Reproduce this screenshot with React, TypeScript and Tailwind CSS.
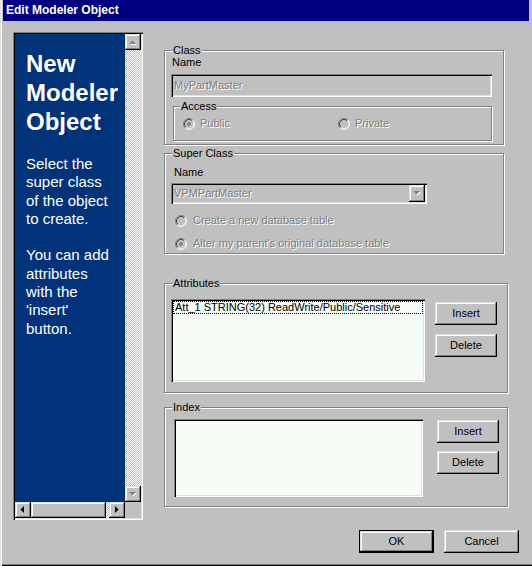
const raised =
  "shadow-[inset_-1px_-1px_0_#000,inset_1px_1px_0_#dfdfdf,inset_-2px_-2px_0_#808080,inset_2px_2px_0_#fff]";
const sunken =
  "shadow-[inset_1px_1px_0_#808080,inset_2px_2px_0_#000,inset_-1px_-1px_0_#fff,inset_-2px_-2px_0_#dfdfdf]";
const checker =
  "bg-[image:repeating-conic-gradient(#fff_0%_25%,#c0c0c0_0%_50%)] bg-[length:2px_2px]";
const disabledText = "text-[#808080] [text-shadow:1px_1px_0_#fff]";

type Dir = "up" | "down" | "left" | "right";

function Arrow({ dir, disabled }: { dir: Dir; disabled?: boolean }) {
  const pts: Record<Dir, string> = {
    up: "4,10 11,10 7.5,6.5",
    down: "4,6 11,6 7.5,9.5",
    left: "9,4 9,11 5.5,7.5",
    right: "6,4 6,11 9.5,7.5",
  };
  return (
    <svg width="16" height="16" viewBox="0 0 16 16">
      {disabled && <polygon points={pts[dir]} fill="#fff" transform="translate(1 1)" />}
      <polygon points={pts[dir]} fill={disabled ? "#808080" : "#000"} />
    </svg>
  );
}

function ScrollButton({ dir, disabled }: { dir: Dir; disabled?: boolean }) {
  return (
    <div className={`w-[16px] h-[16px] bg-[#c0c0c0] ${raised}`}>
      <Arrow dir={dir} disabled={disabled} />
    </div>
  );
}

function Radio({ checked }: { checked?: boolean }) {
  return (
    <svg width="12" height="12" viewBox="0 0 12 12" className="shrink-0">
      <circle cx="6" cy="6" r="5" fill="#c0c0c0" />
      <path d="M2.11 9.89 A5.5 5.5 0 0 1 9.89 2.11" stroke="#808080" fill="none" />
      <path d="M9.89 2.11 A5.5 5.5 0 0 1 2.11 9.89" stroke="#fff" fill="none" />
      <path d="M2.82 9.18 A4.5 4.5 0 0 1 9.18 2.82" stroke="#404040" fill="none" />
      <path d="M9.18 2.82 A4.5 4.5 0 0 1 2.82 9.18" stroke="#dfdfdf" fill="none" />
      {checked && <circle cx="6" cy="6" r="2" fill="#808080" />}
    </svg>
  );
}

function Group({
  label,
  labelLeft = "left-[7px]",
  className,
  children,
}: {
  label: string;
  labelLeft?: string;
  className: string;
  children?: React.ReactNode;
}) {
  return (
    <div
      className={`relative border border-[#808080] shadow-[inset_1px_1px_0_#fff,1px_1px_0_#fff] ${className}`}
    >
      <span className={`absolute top-[-7px] ${labelLeft} bg-[#c0c0c0] px-[1px]`}>{label}</span>
      {children}
    </div>
  );
}

function Button({ label, isDefault, className = "" }: { label: string; isDefault?: boolean; className?: string }) {
  return (
    <div
      className={`flex items-center justify-center bg-[#c0c0c0] ${
        isDefault ? "border border-black" : ""
      } ${raised} ${className}`}
    >
      {label}
    </div>
  );
}

function LeftPanel() {
  return (
    <div className={`ml-[13px] w-[130px] h-[488px] p-[2px] ${sunken}`}>
      <div className="grid grid-cols-[110px_16px] grid-rows-[468px_16px]">
        <div className="bg-[#003379] text-white pl-[11px] pt-[15px]">
          <div className="text-[24px] leading-[29px] font-bold">
            <div>New</div>
            <div>Modeler</div>
            <div>Object</div>
          </div>
          <div className="mt-[19px] text-[15px] leading-[18.3px]">
            <div>Select the</div>
            <div>super class</div>
            <div>of the object</div>
            <div>to create.</div>
            <div className="h-[18.3px]" />
            <div>You can add</div>
            <div>attributes</div>
            <div>with the</div>
            <div>'insert'</div>
            <div>button.</div>
          </div>
        </div>
        <div className="flex flex-col">
          <ScrollButton dir="up" disabled />
          <div className={`flex-1 ${checker}`} />
          <ScrollButton dir="down" disabled />
        </div>
        <div className="flex">
          <ScrollButton dir="left" />
          <div className={`w-[75px] h-[16px] bg-[#c0c0c0] ${raised}`} />
          <div className={`w-[3px] h-[16px] ${checker}`} />
          <ScrollButton dir="right" />
        </div>
        <div className="bg-[#c0c0c0]" />
      </div>
    </div>
  );
}

export default function App() {
  return (
    <div className="w-[532px] h-[566px] bg-[#c0c0c0] font-['Liberation_Sans',Arial,sans-serif] text-[11px] leading-[13px] text-black flex flex-col shadow-[inset_1px_0_0_#dfdfdf,inset_2px_0_0_#fff,inset_0_-1px_0_#000,inset_0_-2px_0_#808080]">
      <div className="mx-[3px] h-[21px] bg-[#000080] text-white font-bold text-[12px] leading-[21px] pl-[3px]">
        Edit Modeler Object
      </div>

      <div className="flex pt-[11px]">
        <LeftPanel />

        <div className="ml-[21px] flex flex-col">
          <Group label="Class" className="mt-[18px] w-[340px] h-[95px]">
            <div className="ml-[7px] mt-[5px]">Name</div>
            <div className={`ml-[6px] mt-[5px] w-[321px] h-[23px] pl-[3px] flex items-center ${sunken} ${disabledText}`}>
              MyPartMaster
            </div>
            <Group label="Access" labelLeft="left-[6px]" className="ml-[8px] mt-[9px] w-[319px] h-[35px]">
              <div className="flex mt-[10px] ml-[9px]">
                <div className={`w-[155px] flex items-center gap-[5px] ${disabledText}`}>
                  <Radio checked />
                  Public
                </div>
                <div className={`flex items-center gap-[5px] ${disabledText}`}>
                  <Radio />
                  Private
                </div>
              </div>
            </Group>
          </Group>

          <Group label="Super Class" className="mt-[8px] w-[340px] h-[101px]">
            <div className="ml-[9px] mt-[12px]">Name</div>
            <div className={`ml-[6px] mt-[4px] w-[256px] h-[21px] p-[2px] flex items-stretch ${sunken}`}>
              <div className={`flex-1 pl-[1px] flex items-center ${disabledText}`}>VPMPartMaster</div>
              <div className={`w-[16px] bg-[#c0c0c0] ${raised}`}>
                <Arrow dir="down" disabled />
              </div>
            </div>
            <div className={`ml-[10px] mt-[10px] flex items-center gap-[6px] ${disabledText}`}>
              <Radio />
              Create a new database table
            </div>
            <div className={`ml-[10px] mt-[10px] flex items-center gap-[6px] ${disabledText}`}>
              <Radio checked />
              Alter my parent's original database table
            </div>
          </Group>

          <Group label="Attributes" className="mt-[29px] w-[344px] h-[110px]">
            <div className="flex ml-[6px] mt-[15px]">
              <div className={`w-[254px] h-[83px] p-[2px] bg-[#f5fbf5] ${sunken}`}>
                <div className="h-[13px] border border-dotted border-black leading-[11px] pl-[1px] whitespace-nowrap">
                  Att_1 STRING(32) ReadWrite/Public/Sensitive
                </div>
              </div>
              <div className="ml-[10px] mt-[3px] flex flex-col gap-[9px]">
                <Button label="Insert" className="w-[62px] h-[23px]" />
                <Button label="Delete" className="w-[62px] h-[23px]" />
              </div>
            </div>
          </Group>

          <Group label="Index" className="mt-[14px] w-[344px] h-[100px]">
            <div className="flex ml-[9px] mt-[11px]">
              <div className={`w-[249px] h-[78px] bg-[#f5fbf5] ${sunken}`} />
              <div className="ml-[14px] mt-[1px] flex flex-col gap-[8px]">
                <Button label="Insert" className="w-[62px] h-[23px]" />
                <Button label="Delete" className="w-[62px] h-[23px]" />
              </div>
            </div>
          </Group>
        </div>
      </div>

      <div className="mt-[10px] pr-[13px] flex justify-end gap-[10px]">
        <Button label="OK" isDefault className="w-[75px] h-[23px]" />
        <Button label="Cancel" className="w-[75px] h-[23px]" />
      </div>
    </div>
  );
}
